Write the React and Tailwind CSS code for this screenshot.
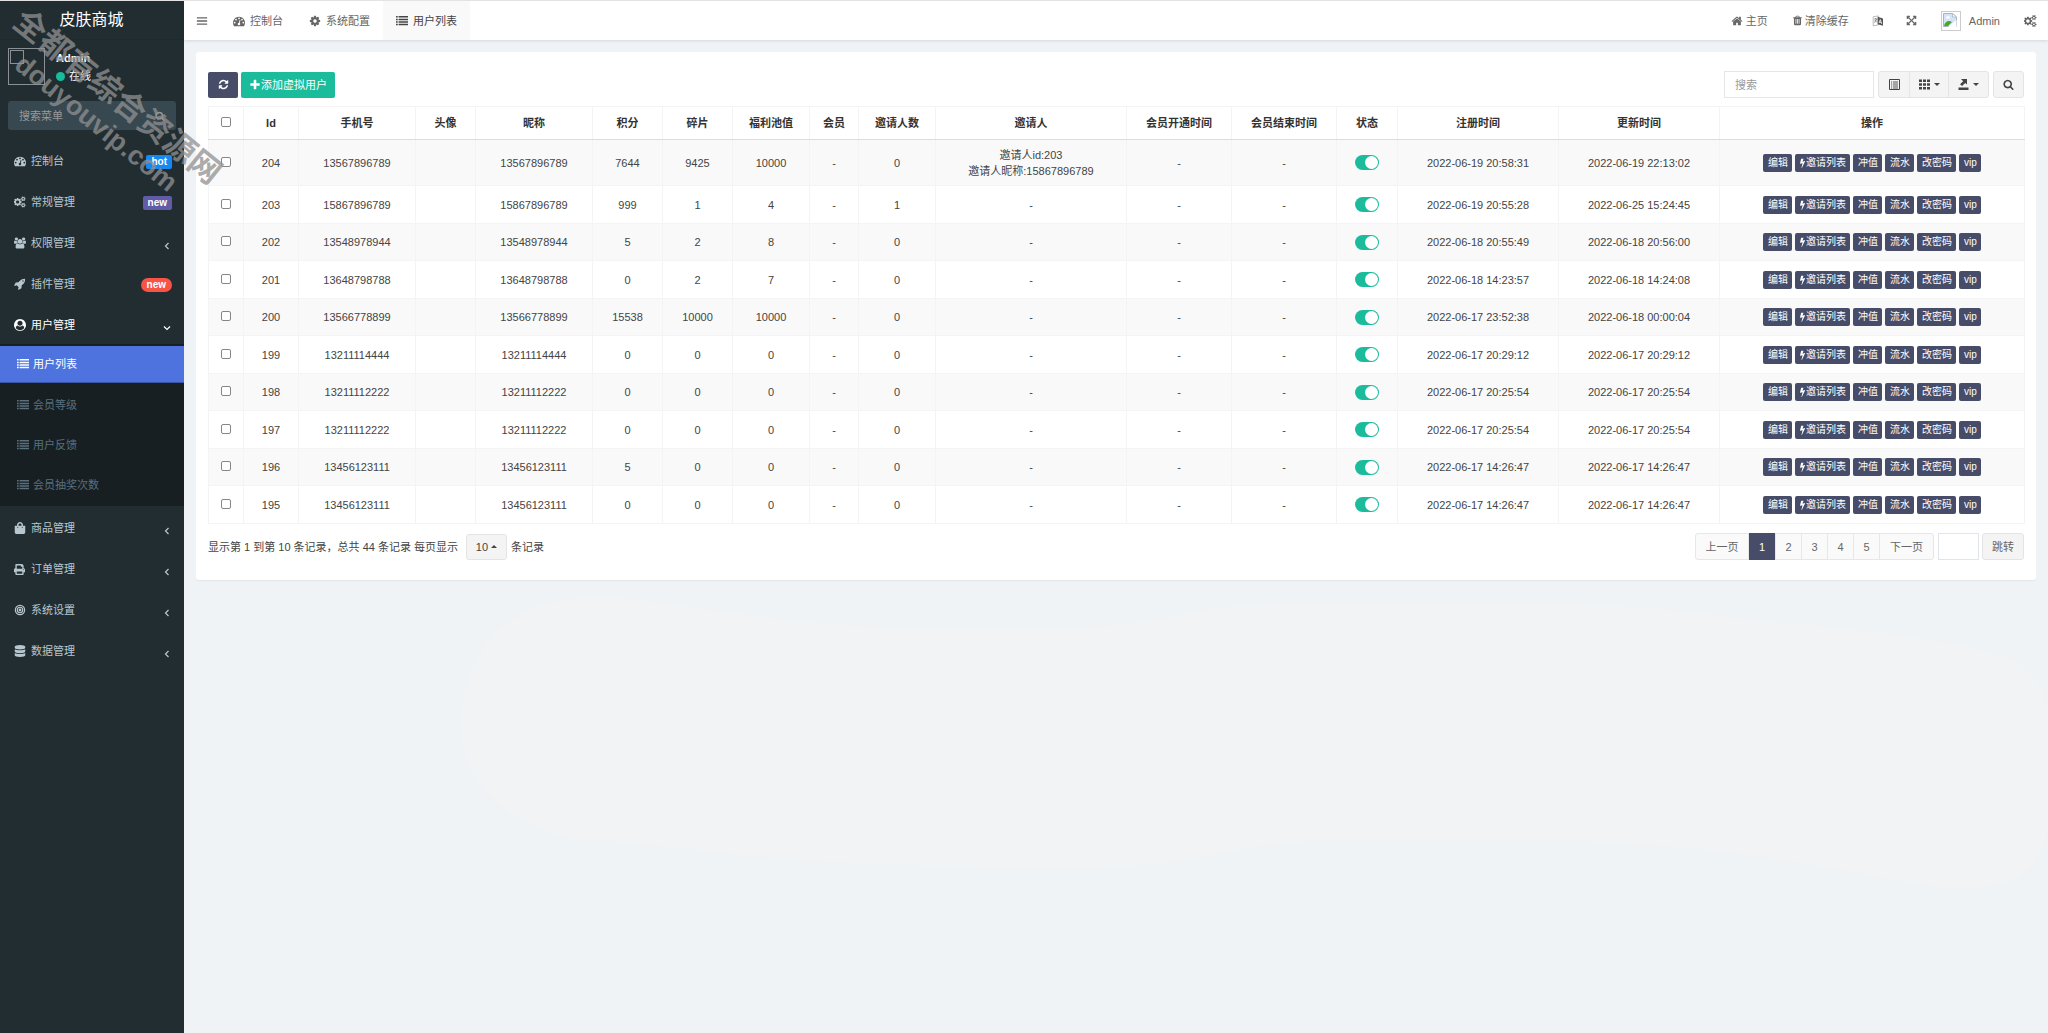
import { useState } from "react";
import {
  FaShoppingBag,
  FaPrint,
  FaDatabase,
  FaExpandArrowsAlt,
} from "react-icons/fa";

// icon shapes, 1792 units high
const ICONS = {
  dashboard: [1792, "M384 1152q0-53-37.5-90.5t-90.5-37.5-90.5 37.5-37.5 90.5 37.5 90.5 90.5 37.5 90.5-37.5 37.5-90.5zm192-448q0-53-37.5-90.5t-90.5-37.5-90.5 37.5-37.5 90.5 37.5 90.5 90.5 37.5 90.5-37.5 37.5-90.5zm428 481l101-382q6-26-7.5-48.5t-38.5-29.5-48 6.5-30 39.5l-101 382q-60 5-107 43.5t-63 98.5q-20 77 20 146t117 89 146-20 89-117q16-60-6-117t-72-91zm660-33q0-53-37.5-90.5t-90.5-37.5-90.5 37.5-37.5 90.5 37.5 90.5 90.5 37.5 90.5-37.5 37.5-90.5zm-640-640q0-53-37.5-90.5t-90.5-37.5-90.5 37.5-37.5 90.5 37.5 90.5 90.5 37.5 90.5-37.5 37.5-90.5zm448 192q0-53-37.5-90.5t-90.5-37.5-90.5 37.5-37.5 90.5 37.5 90.5 90.5 37.5 90.5-37.5 37.5-90.5zm320 448q0 261-141 483-19 29-54 29h-1402q-35 0-54-29-141-221-141-483 0-182 71-348t191-286 286-191 348-71 348 71 286 191 191 286 71 348z"],
  cogs: [1920, "M832 896q0-106-75-181t-181-75-181 75-75 181 75 181 181 75 181-75 75-181zm768 512q0-52-38-90t-90-38-90 38-38 90q0 53 37.5 90.5t90.5 37.5 90.5-37.5 37.5-90.5zm0-1024q0-52-38-90t-90-38-90 38-38 90q0 53 37.5 90.5t90.5 37.5 90.5-37.5 37.5-90.5zm-384 421v185q0 10-7 19.5t-16 10.5l-155 24q-11 35-32 76 34 48 90 115 7 10 7 20 0 12-7 19-23 30-82.5 89.5t-78.5 59.5q-11 0-21-7l-115-90q-37 19-77 31-11 108-23 155-7 24-30 24h-186q-11 0-20-7.5t-10-17.5l-23-153q-34-10-75-31l-118 89q-7 7-20 7-11 0-21-8-144-133-144-160 0-9 7-19 10-14 41-53t47-61q-23-44-35-82l-152-24q-10-1-17-9.5t-7-19.5v-185q0-10 7-19.5t16-10.5l155-24q11-35 32-76-34-48-90-115-7-11-7-20 0-12 7-20 22-30 82-89t79-59q11 0 21 7l115 90q34-18 77-32 11-108 23-154 7-24 30-24h186q11 0 20 7.5t10 17.5l23 153q34 10 75 31l118-89q8-7 20-7 11 0 21 8 144 133 144 160 0 9-7 19-12 16-42 54t-45 60q23 48 34 82l152 23q10 2 17 10.5t7 19.5zm640 533v140q0 16-149 31-12 27-30 52 51 113 51 138 0 4-4 7-122 71-124 71-8 0-46-47t-52-68q-20 2-30 2t-30-2q-14 21-52 68t-46 47q-2 0-124-71-4-3-4-7 0-25 51-138-18-25-30-52-149-15-149-31v-140q0-16 149-31 13-29 30-52-51-113-51-138 0-4 4-7 4-2 35-20t59-34 30-16q8 0 46 46.5t52 67.5q20-2 30-2t30 2q51-71 92-112l6-2q4 0 124 70 4 3 4 7 0 25-51 138 17 23 30 52 149 15 149 31zm0-1024v140q0 16-149 31-12 27-30 52 51 113 51 138 0 4-4 7-122 71-124 71-8 0-46-47t-52-68q-20 2-30 2t-30-2q-14 21-52 68t-46 47q-2 0-124-71-4-3-4-7 0-25 51-138-18-25-30-52-149-15-149-31v-140q0-16 149-31 13-29 30-52-51-113-51-138 0-4 4-7 4-2 35-20t59-34 30-16q8 0 46 46.5t52 67.5q20-2 30-2t30 2q51-71 92-112l6-2q4 0 124 70 4 3 4 7 0 25-51 138 17 23 30 52 149 15 149 31z"],
  cog: [1792, "M1152 896q0-106-75-181t-181-75-181 75-75 181 75 181 181 75 181-75 75-181zm512-109v222q0 12-8 23t-20 13l-185 28q-19 54-39 91 35 50 107 138 10 12 10 25t-9 23q-27 37-99 108t-94 71q-12 0-26-9l-138-108q-44 23-91 38-16 136-29 186-7 28-36 28h-222q-14 0-24.5-8.5t-11.5-21.5l-28-184q-49-16-90-37l-141 107q-10 9-25 9-14 0-25-11-126-114-165-168-7-10-7-23 0-12 8-23 15-21 51-66.5t54-70.5q-27-50-41-99l-183-27q-13-2-21-12.5t-8-23.5v-222q0-12 8-23t19-13l186-28q14-46 39-92-40-57-107-138-10-12-10-24 0-10 9-23 26-36 98.5-107.5t94.5-71.5q13 0 26 10l138 107q44-23 91-38 16-136 29-186 7-28 36-28h222q14 0 24.5 8.5t11.5 21.5l28 184q49 16 90 37l142-107q9-9 24-9 13 0 25 10 129 119 165 170 7 8 7 22 0 12-8 23-15 21-51 66.5t-54 70.5q26 50 41 98l183 28q13 2 21 12.5t8 23.5z"],
  list: [1792, "M0 160h256v224H0zM384 160h1408v224H384zM0 544h256v224H0zM384 544h1408v224H384zM0 928h256v224H0zM384 928h1408v224H384zM0 1312h256v224H0zM384 1312h1408v224H384z"],
  bars: [1792, "M128 320h1536v192H128zM128 800h1536v192H128zM128 1280h1536v192H128z"],
  home: [1792, "M1472 992v480q0 26-19 45t-45 19h-384v-384h-256v384h-384q-26 0-45-19t-19-45v-480q0-1 .5-3t.5-3l575-474 575 474q1 2 1 6zm223-69l-62 74q-8 9-21 11h-3q-13 0-21-7l-692-577-692 577q-12 8-24 7-13-2-21-11l-62-74q-8-10-7-23.5t11-21.5l719-599q32-26 76-26t76 26l244 204v-195q0-14 9-23t23-9h192q14 0 23 9t9 23v408l219 182q10 8 11 21.5t-7 23.5z"],
  trash: [1792, "M704 1376v-704q0-14-9-23t-23-9h-64q-14 0-23 9t-9 23v704q0 14 9 23t23 9h64q14 0 23-9t9-23zm256 0v-704q0-14-9-23t-23-9h-64q-14 0-23 9t-9 23v704q0 14 9 23t23 9h64q14 0 23-9t9-23zm256 0v-704q0-14-9-23t-23-9h-64q-14 0-23 9t-9 23v704q0 14 9 23t23 9h64q14 0 23-9t9-23zm-544-992h448l-48-117q-7-9-17-11h-317q-10 2-17 11zm928 32v64q0 14-9 23t-23 9h-96v948q0 83-47 143.5t-113 60.5h-832q-66 0-113-58.5t-47-141.5v-952h-96q-14 0-23-9t-9-23v-64q0-14 9-23t23-9h309l70-167q15-37 54-63t79-26h320q40 0 79 26t54 63l70 167h309q14 0 23 9t9 23z"],
  refresh: [1792, "M1639 1056q0 5-1 7-64 268-268 434.5t-478 166.5q-146 0-282.5-55t-243.5-157l-129 129q-19 19-45 19t-45-19-19-45v-448q0-26 19-45t45-19h448q26 0 45 19t19 45-19 45l-137 137q71 66 161 102t187 36q134 0 250-65t186-179q11-17 53-117 8-23 30-23h192q13 0 22.5 9.5t9.5 22.5zm25-800v448q0 26-19 45t-45 19h-448q-26 0-45-19t-19-45 19-45l138-138q-148-137-349-137-134 0-250 65t-186 179q-11 17-53 117-8 23-30 23h-199q-13 0-22.5-9.5t-9.5-22.5v-7q65-268 270-434.5t480-166.5q146 0 284 55.5t245 156.5l130-129q19-19 45-19t45 19 19 45z"],
  plus: [1792, "M1600 736v192q0 40-28 68t-68 28h-416v416q0 40-28 68t-68 28h-192q-40 0-68-28t-28-68v-416h-416q-40 0-68-28t-28-68v-192q0-40 28-68t68-28h416v-416q0-40 28-68t68-28h192q40 0 68 28t28 68v416h416q40 0 68 28t28 68z"],
  search: [1792, "M1216 832q0-185-131.5-316.5t-316.5-131.5-316.5 131.5-131.5 316.5 131.5 316.5 316.5 131.5 316.5-131.5 131.5-316.5zm512 832q0 52-38 90t-90 38q-54 0-90-38l-343-342q-179 124-399 124-143 0-273.5-55.5t-225-150-150-225-55.5-273.5 55.5-273.5 150-225 225-150 273.5-55.5 273.5 55.5 225 150 150 225 55.5 273.5q0 220-124 399l343 343q37 37 37 90z"],
  group: [1920, "M593 896q-162 5-265 128h-134q-82 0-138-40.5t-56-118.5q0-353 124-353 6 0 43.5 21t97.5 42.5 119 21.5q67 0 133-23-5 37-5 66 0 139 81 256zm1071 637q0 120-73 189.5t-194 69.5h-874q-121 0-194-69.5t-73-189.5q0-53 3.5-103.5t14-109 26.5-108.5 43-97.5 62-81 85.5-53.5 111.5-20q10 0 43 21.5t73 48 107 48 135 21.5 135-21.5 107-48 73-48 43-21.5q61 0 111.5 20t85.5 53.5 62 81 43 97.5 26.5 108.5 14 109 3.5 103.5zm-1024-1277q0 106-75 181t-181 75-181-75-75-181 75-181 181-75 181 75 75 181zm704 384q0 159-112.5 271.5t-271.5 112.5-271.5-112.5-112.5-271.5 112.5-271.5 271.5-112.5 271.5 112.5 112.5 271.5zm576 225q0 78-56 118.5t-138 40.5h-134q-103-123-265-128 81-117 81-256 0-29-5-66 66 23 133 23 59 0 119-21.5t97.5-42.5 43.5-21q124 0 124 353zm-128-609q0 106-75 181t-181 75-181-75-75-181 75-181 181-75 181 75 75 181z"],
  rocket: [1792, "M1440 448q0-40-28-68t-68-28-68 28-28 68 28 68 68 28 68-28 28-68zm224-288q0 249-75.5 430.5t-253.5 360.5q-81 80-195 176l-20 379q-2 16-16 26l-384 224q-7 4-16 4-12 0-23-9l-64-64q-13-14-8-32l85-276-281-281-276 85q-3 1-9 1-14 0-23-9l-64-64q-17-19-5-39l224-384q10-14 26-16l379-20q96-114 176-195 188-187 358-258t431-71q14 0 24 9.5t10 22.5z"],
  user: [1792, "M1523 1339q-22-155-87.5-257.5t-184.5-118.5q-67 74-159.5 115.5t-195.5 41.5-195.5-41.5-159.5-115.5q-119 16-184.5 118.5t-87.5 257.5q106 150 271 237.5t356 87.5 356-87.5 271-237.5zm-243-699q0-159-112.5-271.5t-271.5-112.5-271.5 112.5-112.5 271.5 112.5 271.5 271.5 112.5 271.5-112.5 112.5-271.5zm512 256q0 182-71 347.5t-190.5 286-285.5 191.5-349 71q-182 0-348-71t-286-191-191-286-71-348 71-348 191-286 286-191 348-71 348 71 286 191 191 286 71 348z"],
};

const Icon = ({ name, className = "size-3" }) => (
  <svg viewBox={`0 0 ${ICONS[name][0]} 1792`} className={className} fill="currentColor" aria-hidden="true">
    <path d={ICONS[name][1]} />
  </svg>
);

const Bolt = () => (
  <svg viewBox="448 0 896 1792" className="h-[10px] w-[5px]" fill="currentColor" aria-hidden="true">
    <path d="M1333 566q18 20 7 44l-540 1157q-13 25-42 25-4 0-14-2-17-5-25.5-19t-4.5-30l197-808-406 101q-4 1-12 1-18 0-31-11-18-15-13-39l201-825q4-14 16-23t28-9h328q19 0 32 12.5t13 29.5q0 8-5 18l-171 463 396-98q8-2 12-2 19 0 34 15z" />
  </svg>
);

const Bullseye = () => (
  <svg viewBox="0 0 12 12" className="size-3" fill="none" stroke="currentColor" aria-hidden="true">
    <circle cx="6" cy="6" r="4.6" strokeWidth="1.3" />
    <circle cx="6" cy="6" r="2.7" strokeWidth="1.1" />
    <circle cx="6" cy="6" r="1.4" fill="currentColor" stroke="none" />
  </svg>
);

const Translate = () => (
  <svg viewBox="0 0 12 12" className="size-3" aria-hidden="true">
    <path d="M1.2 1.8 6.4.9v8.9l-5.2 1.1z" fill="#fff" stroke="#aaa" strokeWidth=".8" />
    <path d="M2.2 4h3M3.7 3v1M4.8 4.2 2.4 7.6M2.8 5l2 2.4" stroke="#666" strokeWidth=".7" fill="none" />
    <path d="m5.600 1.800 5.400 1.700v7.300L5.600 9.200z" fill="#555" />
    <path d="m7.1 8 1.200-3.400L9.700 8.800M7.500 7.100l1.700.4" stroke="#fff" strokeWidth=".8" fill="none" />
  </svg>
);

const Caret = ({ up }) => (
  <svg viewBox="0 0 6 3" className="h-[3px] w-[6px]" fill="currentColor" aria-hidden="true">
    <path d={up ? "M0 3h6L3 0z" : "M0 0h6L3 3z"} />
  </svg>
);

const Arrow = ({ open }) => (
  <svg viewBox="0 0 8 8" className="mt-[6px] mr-[1px] size-2" fill="none" stroke="currentColor" strokeWidth="1.2" aria-hidden="true">
    <path d={open ? "M1 2.5 4 5.5 7 2.5" : "M5.5 1 2.5 4 5.5 7"} />
  </svg>
);

const topMenus = [
  { text: "控制台", icon: <Icon name="dashboard" />, badge: "hot", badgeClass: "rounded-[2px] bg-[#1688f1] px-[5px]" },
  { text: "常规管理", icon: <Icon name="cogs" />, badge: "new", badgeClass: "rounded-[2px] bg-[#605ca8] px-[5px]" },
  { text: "权限管理", icon: <Icon name="group" /> },
  { text: "插件管理", icon: <Icon name="rocket" />, badge: "new", badgeClass: "rounded-full bg-[#f75444] px-[6px]" },
  {
    text: "用户管理",
    icon: <Icon name="user" />,
    children: ["用户列表", "会员等级", "用户反馈", "会员抽奖次数"],
  },
  { text: "商品管理", icon: <FaShoppingBag className="size-3" /> },
  { text: "订单管理", icon: <FaPrint className="size-[11px]" /> },
  { text: "系统设置", icon: <Bullseye /> },
  { text: "数据管理", icon: <FaDatabase className="size-3" /> },
];

const columns = [
  ["Id", "w-[55px]"],
  ["手机号", "w-[117px]"],
  ["头像", "w-[60px]"],
  ["昵称", "w-[117px]"],
  ["积分", "w-[70px]"],
  ["碎片", "w-[70px]"],
  ["福利池值", "w-[77px]"],
  ["会员", "w-[49px]"],
  ["邀请人数", "w-[77px]"],
  ["邀请人", "w-[191px]"],
  ["会员开通时间", "w-[105px]"],
  ["会员结束时间", "w-[105px]"],
  ["状态", "w-[61px]"],
  ["注册时间", "w-[161px]"],
  ["更新时间", "w-[161px]"],
  ["操作", "w-[305px]"],
];

// id, phone, score, chips, pool, invited, created, updated
const rows = [
  [204, "13567896789", 7644, 9425, 10000, 0, "2022-06-19 20:58:31", "2022-06-19 22:13:02"],
  [203, "15867896789", 999, 1, 4, 1, "2022-06-19 20:55:28", "2022-06-25 15:24:45"],
  [202, "13548978944", 5, 2, 8, 0, "2022-06-18 20:55:49", "2022-06-18 20:56:00"],
  [201, "13648798788", 0, 2, 7, 0, "2022-06-18 14:23:57", "2022-06-18 14:24:08"],
  [200, "13566778899", 15538, 10000, 10000, 0, "2022-06-17 23:52:38", "2022-06-18 00:00:04"],
  [199, "13211114444", 0, 0, 0, 0, "2022-06-17 20:29:12", "2022-06-17 20:29:12"],
  [198, "13211112222", 0, 0, 0, 0, "2022-06-17 20:25:54", "2022-06-17 20:25:54"],
  [197, "13211112222", 0, 0, 0, 0, "2022-06-17 20:25:54", "2022-06-17 20:25:54"],
  [196, "13456123111", 5, 0, 0, 0, "2022-06-17 14:26:47", "2022-06-17 14:26:47"],
  [195, "13456123111", 0, 0, 0, 0, "2022-06-17 14:26:47", "2022-06-17 14:26:47"],
];

const actions = ["编辑", "邀请列表", "冲值", "流水", "改密码", "vip"];

const Check = ({ label }) => (
  <input
    type="checkbox"
    aria-label={label}
    className="mb-[2px] block size-[10px] appearance-none rounded-[2px] border border-[#868686] bg-white checked:bg-[#474d69]"
  />
);

const Sidebar = () => (
  <aside className="w-46 shrink-0 bg-[#222d32] text-[#b8c7ce]">
    <a href="#home" className="flex h-[39px] items-center justify-center border-b border-[#1f292e] pr-[1px] text-base text-white">
      皮肤商城
    </a>

    {/* user panel */}
    <div className="flex h-[61px] gap-[11px] px-2 pt-2">
      <div className="size-[37px] border border-[#8a9094] p-[1px]">
        <div className="size-[14px] border border-[#8a9094]" />
      </div>
      <div className="leading-[18px]">
        <p className="pt-[1px] font-bold text-white">Admin</p>
        <p className="flex items-center gap-1 text-white">
          <span className="size-[9px] rounded-full bg-[#18bc9c]" />
          在线
        </p>
      </div>
    </div>

    <form className="mx-2 flex h-[29px] items-center rounded-[3px] bg-[#374850] pr-[11px] pl-[11px]">
      <input
        type="text"
        aria-label="搜索菜单"
        placeholder="搜索菜单"
        className="min-w-0 flex-1 bg-transparent outline-none placeholder:text-[#999]"
      />
      <button type="button" aria-label="搜索" className="text-[#999]">
        <Icon name="search" className="size-[10px]" />
      </button>
    </form>

    <nav className="mt-3">
      <ul className="flex flex-col gap-[3px]">
        {topMenus.map((m) => (
          <li key={m.text}>
            <a
              href="#menu"
              className={m.children ? "flex h-[38px] items-center pr-3 pl-[14px] text-white" : "flex h-[38px] items-center pr-3 pl-[14px]"}
            >
              <span className="flex w-[17px]">{m.icon}</span>
              <span className="flex-1">{m.text}</span>
              {m.badge ? (
                <span className={"mt-[2px] h-[14px] text-[10px] leading-[14px] font-bold text-white " + m.badgeClass}>
                  {m.badge}
                </span>
              ) : (
                <Arrow open={!!m.children} />
              )}
            </a>
            {m.children && (
              <ul className="flex flex-col gap-[3px] bg-[#181f23] pt-[2px] pb-[3px]">
                {m.children.map((c, i) => (
                  <li key={c}>
                    <a
                      href="#sub"
                      className={
                        i === 0
                          ? "flex h-[37px] items-center gap-1 border-b border-[#3a55a5] bg-[#4e73df] pl-[17px] text-white"
                          : "flex h-[37px] items-center gap-1 pl-[17px] text-[#59707d]"
                      }
                    >
                      <Icon name="list" />
                      {c}
                    </a>
                  </li>
                ))}
              </ul>
            )}
          </li>
        ))}
      </ul>
    </nav>
  </aside>
);

const Header = () => (
  <header className="relative flex h-[39px] items-center justify-between bg-white text-[#666] shadow-[0_1px_3px_rgba(0,21,41,0.12)]">
    <div className="flex h-full items-center">
      <button type="button" aria-label="菜单" className="mr-3 ml-3">
        <Icon name="bars" className="size-3" />
      </button>
      <a href="#dashboard" className="flex h-full items-center gap-[5px] px-[13px]">
        <Icon name="dashboard" />控制台
      </a>
      <a href="#config" className="flex h-full items-center gap-[5px] px-[13px]">
        <Icon name="cog" />系统配置
      </a>
      <a href="#users" className="flex h-full items-center gap-[5px] bg-[#f9f9f9] px-[13px] text-[#444]">
        <Icon name="list" />用户列表
      </a>
    </div>
    <div className="flex items-center pr-[11px]">
      <a href="#index" className="mr-6 flex items-center gap-[3px]">
        <Icon name="home" className="size-3" />主页
      </a>
      <a href="#cache" className="mr-[23px] flex items-center gap-[2px]">
        <Icon name="trash" className="size-[11px]" />清除缓存
      </a>
      <button type="button" aria-label="语言" className="mr-[22px]"><Translate /></button>
      <button type="button" aria-label="全屏" className="mr-6"><FaExpandArrowsAlt className="size-[11px]" /></button>
      <a href="#admin" className="mr-6 flex items-center gap-2">
        <span className="flex size-5 items-start border border-[#ccc] p-[1px]">
          <svg viewBox="0 0 14 14" className="size-[14px]" aria-hidden="true">
            <path d="M.5.5h9L13.500 4v9.500H.5z" fill="#d5e3f8" stroke="#a9b4c2" />
            <path d="M9.500.5V4h4z" fill="#fff" stroke="#a9b4c2" strokeWidth=".8" />
            <ellipse cx="5" cy="4.500" rx="2" ry="1.200" fill="#fff" />
            <path d="M1 13c1-5 5-6 8-4L5 13z" fill="#4aa52d" />
            <path d="M5 14l8.500-7v7z" fill="#fff" />
          </svg>
        </span>
        Admin
      </a>
      <button type="button" aria-label="设置"><Icon name="cogs" className="h-3 w-[13px]" /></button>
    </div>
  </header>
);

const Toolbar = () => (
  <div className="flex h-[27px] items-center justify-between">
    <div className="flex gap-[3px]">
      <button type="button" aria-label="刷新" className="flex h-[26px] w-[30px] items-center justify-center rounded-[2px] bg-[#474d69] text-white">
        <Icon name="refresh" className="size-[11px]" />
      </button>
      <button type="button" className="flex h-[26px] items-center rounded-[2px] bg-[#1abc9c] px-2 text-white">
        <Icon name="plus" className="size-3" />添加虚拟用户
      </button>
    </div>
    <div className="flex h-full">
      <input
        type="text"
        aria-label="搜索"
        placeholder="搜索"
        className="w-[150px] border border-[#e4e7ea] px-[10px] outline-none placeholder:text-[#999]"
      />
      <div className="ml-1 flex divide-x divide-[#e4e4e4] rounded-[3px] border border-[#e4e4e4] bg-[#f4f4f4] text-[#444]">
        <button type="button" aria-label="切换" className="flex w-[31px] items-center justify-center">
          <svg viewBox="0 0 11 11" className="size-[11px]" fill="none" stroke="currentColor" aria-hidden="true">
            <path d="M.5.5h10v10H.5z" />
            <path d="M2 3h1.200M4 3h5M2 5h1.200M4 5h5M2 7h1.200M4 7h5M2 9h1.200M4 9h5" strokeWidth=".9" />
          </svg>
        </button>
        <button type="button" aria-label="列" className="flex w-[39px] items-center justify-center gap-1">
          <svg viewBox="0 0 11 11" className="size-[11px]" fill="currentColor" aria-hidden="true">
            <path d="M0 .5h3v2.600H0zM4 .5h3v2.600H4zM8 .5h3v2.600H8zM0 4.200h3v2.600H0zM4 4.200h3v2.600H4zM8 4.200h3v2.600H8zM0 7.900h3v2.600H0zM4 7.900h3v2.600H4zM8 7.900h3v2.600H8z" />
          </svg>
          <Caret />
        </button>
        <button type="button" aria-label="导出" className="flex w-[39px] items-center justify-center gap-1">
          <svg viewBox="0 0 11 11" className="size-[11px]" fill="currentColor" aria-hidden="true">
            <path d="M.5 8.500h10V11H.5zM3 0h6v5.500L7.200 3.900 4.100 7 2 5.200l3.200-3z" />
          </svg>
          <Caret />
        </button>
      </div>
      <button type="button" aria-label="查找" className="ml-1 flex w-[31px] items-center justify-center rounded-[3px] border border-[#e4e4e4] bg-[#f4f4f4] text-[#444]">
        <Icon name="search" className="size-[11px]" />
      </button>
    </div>
  </div>
);

const UserTable = () => {
  const [off, setOff] = useState([]);

  const toggle = (id) => {
    setOff(off.includes(id) ? off.filter((i) => i !== id) : [...off, id]);
  };

  const cell = "border border-[#f4f4f4] p-0";

  return (
    <table className="mt-2 w-full table-fixed border-collapse text-center text-[#444]">
      <thead>
        <tr className="h-[33px] text-[#333]">
          <th className="w-[35px] border border-[#f4f4f4] border-b-[#ddd] p-0">
            <div className="flex justify-center"><Check label="全选" /></div>
          </th>
          {columns.map(([title, width]) => (
            <th key={title} className={"border border-[#f4f4f4] border-b-[#ddd] p-0 font-bold " + width}>
              {title}
            </th>
          ))}
        </tr>
      </thead>
      <tbody>
        {rows.map(([id, phone, score, chips, pool, invited, created, updated], i) => (
          <tr
            key={id}
            className={i === 0 ? "h-[46px] bg-[#f9f9f9]" : i % 2 ? "h-[38px]" : "h-[37px] bg-[#f9f9f9]"}
          >
            <td className={cell}>
              <div className="flex justify-center"><Check label={`选择 ${id}`} /></div>
            </td>
            <td className={cell}>{id}</td>
            <td className={cell}>{phone}</td>
            <td className={cell}></td>
            <td className={cell}>{phone}</td>
            <td className={cell}>{score}</td>
            <td className={cell}>{chips}</td>
            <td className={cell}>{pool}</td>
            <td className={cell}>-</td>
            <td className={cell}>{invited}</td>
            <td className={cell}>
              {id === 204 ? <>邀请人id:203<br />邀请人昵称:15867896789</> : "-"}
            </td>
            <td className={cell}>-</td>
            <td className={cell}>-</td>
            <td className={cell}>
              <button
                type="button"
                role="switch"
                aria-label="状态"
                aria-checked={!off.includes(id)}
                onClick={() => toggle(id)}
                className={
                  off.includes(id)
                    ? "mx-auto flex h-[15px] w-6 items-center rounded-full bg-gray-300 p-[1px]"
                    : "mx-auto flex h-[15px] w-6 items-center justify-end rounded-full bg-[#1abc9c] p-[1px]"
                }
              >
                <span className="size-[13px] rounded-full bg-white" />
              </button>
            </td>
            <td className={cell}>{created}</td>
            <td className={cell}>{updated}</td>
            <td className={cell}>
              <div className="flex justify-center gap-[3px]">
                {actions.map((a) => (
                  <button
                    key={a}
                    type="button"
                    className="flex h-[18px] items-center gap-[1px] rounded-[2px] bg-[#474d69] pr-1 pl-[5px] text-[10px] text-white"
                  >
                    {a === "邀请列表" && <Bolt />}
                    {a}
                  </button>
                ))}
              </div>
            </td>
          </tr>
        ))}
      </tbody>
    </table>
  );
};

const Pagination = () => (
  <div className="mt-[9px] flex h-[27px] items-center justify-between text-[#444]">
    <div className="flex items-center gap-1">
      <span className="mr-1">显示第 1 到第 10 条记录，总共 44 条记录 每页显示</span>
      <button type="button" className="flex h-[26px] w-[41px] items-center justify-center gap-[3px] rounded-[3px] border border-[#e4e4e4] bg-[#f4f4f4]">
        10 <Caret up />
      </button>
      <span>条记录</span>
    </div>
    <div className="flex h-full text-[#666]">
      <ul className="flex divide-x divide-[#e7e7e7] rounded-[3px] border border-[#e7e7e7] bg-[#fafafa]">
        <li className="flex w-[53px]"><a href="#prev" className="m-auto">上一页</a></li>
        <li className="-my-[1px] flex w-[27px] bg-[#474d69] text-white"><a href="#1" className="m-auto">1</a></li>
        {[2, 3, 4, 5].map((n) => (
          <li key={n} className="flex w-[26px]"><a href={"#" + n} className="m-auto">{n}</a></li>
        ))}
        <li className="flex w-[53px]"><a href="#next" className="m-auto">下一页</a></li>
      </ul>
      <input type="text" aria-label="页码" className="ml-1 w-[41px] border border-[#dfe5ea] px-2 outline-none" />
      <button type="button" className="ml-[3px] w-[42px] rounded-[3px] border border-[#e4e4e4] bg-[#f4f4f4]">跳转</button>
    </div>
  </div>
);

export default function App() {
  return (
    <div className="relative flex min-h-screen overflow-hidden border-t border-[#e3e3e3] bg-[#eff3f6] font-['Liberation_Sans','Noto_Sans_CJK_SC',sans-serif] text-[11px] leading-4">
      <Sidebar />
      <div className="flex min-w-0 flex-1 flex-col">
        <Header />
        <main className="flex flex-1 flex-col">
          <section className="mx-3 mt-3 rounded-[3px] bg-white px-3 pt-[19px] pb-[20px] shadow-[0_1px_1px_rgba(0,0,0,0.05)]">
            <Toolbar />
            <UserTable />
            <Pagination />
          </section>
          <svg viewBox="184 580 1864 453" preserveAspectRatio="none" className="w-full flex-1" aria-hidden="true">
            <path
              d="M461 720C464 670 490 597 600 597C690 600 760 630 1000 630C1190 630 1170 604 1290 604H1580C1680 608 1720 618 1800 624C1900 634 1990 646 2020 665Q2048 684 2048 720V820C2046 870 2010 889 1960 889C1860 880 1760 840 1500 840H1330C1220 845 1190 867 1100 867C740 870 690 842 570 839C500 820 461 780 461 720Z"
              fill="#f2f3f5"
            />
          </svg>
        </main>
      </div>

      <div className="pointer-events-none absolute top-[75px] -left-[23px] w-[260px] rotate-[39deg] text-center text-[27px] leading-[34px] font-bold text-[#919191]/75">
        <p className="text-[32px]">全都有综合资源网</p>
        <p>douyouvip.com</p>
      </div>
    </div>
  );
}
